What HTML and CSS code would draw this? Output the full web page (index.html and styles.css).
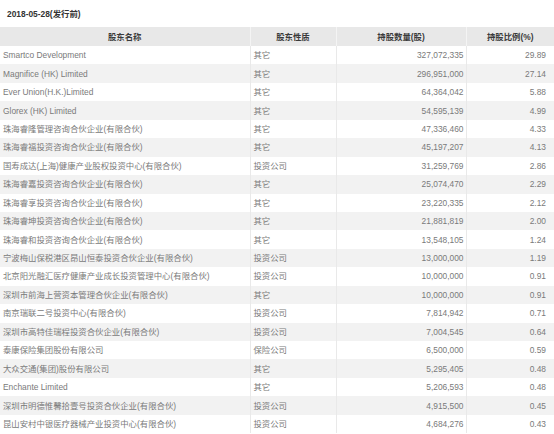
FILE: index.html
```html
<!DOCTYPE html>
<html lang="zh">
<head>
<meta charset="utf-8">
<link rel="stylesheet" href="styles.css">
</head>
<body>
<div class="title">2018-05-28(发行前)</div>
<table class="holders">
<colgroup>
<col class="c-name"><col class="c-type"><col class="c-num"><col class="c-pct">
</colgroup>
<thead>
<tr><th>股东名称</th><th>股东性质</th><th>持股数量(股)</th><th>持股比例(%)</th></tr>
</thead>
<tbody>
<tr><td>Smartco Development</td><td>其它</td><td class="num">327,072,335</td><td class="pct">29.89</td></tr>
<tr><td>Magnifice (HK) Limited</td><td>其它</td><td class="num">296,951,000</td><td class="pct">27.14</td></tr>
<tr><td>Ever Union(H.K.)Limited</td><td>其它</td><td class="num">64,364,042</td><td class="pct">5.88</td></tr>
<tr><td>Glorex (HK) Limited</td><td>其它</td><td class="num">54,595,139</td><td class="pct">4.99</td></tr>
<tr><td>珠海睿隆管理咨询合伙企业(有限合伙)</td><td>其它</td><td class="num">47,336,460</td><td class="pct">4.33</td></tr>
<tr><td>珠海睿福投资咨询合伙企业(有限合伙)</td><td>其它</td><td class="num">45,197,207</td><td class="pct">4.13</td></tr>
<tr><td>国寿成达(上海)健康产业股权投资中心(有限合伙)</td><td>投资公司</td><td class="num">31,259,769</td><td class="pct">2.86</td></tr>
<tr><td>珠海睿嘉投资咨询合伙企业(有限合伙)</td><td>其它</td><td class="num">25,074,470</td><td class="pct">2.29</td></tr>
<tr><td>珠海睿享投资咨询合伙企业(有限合伙)</td><td>其它</td><td class="num">23,220,335</td><td class="pct">2.12</td></tr>
<tr><td>珠海睿坤投资咨询合伙企业(有限合伙)</td><td>其它</td><td class="num">21,881,819</td><td class="pct">2.00</td></tr>
<tr><td>珠海睿和投资咨询合伙企业(有限合伙)</td><td>其它</td><td class="num">13,548,105</td><td class="pct">1.24</td></tr>
<tr><td>宁波梅山保税港区昂山恒泰投资合伙企业(有限合伙)</td><td>投资公司</td><td class="num">13,000,000</td><td class="pct">1.19</td></tr>
<tr><td>北京阳光融汇医疗健康产业成长投资管理中心(有限合伙)</td><td>投资公司</td><td class="num">10,000,000</td><td class="pct">0.91</td></tr>
<tr><td>深圳市前海上营资本管理合伙企业(有限合伙)</td><td>其它</td><td class="num">10,000,000</td><td class="pct">0.91</td></tr>
<tr><td>南京瑞联二号投资中心(有限合伙)</td><td>投资公司</td><td class="num">7,814,942</td><td class="pct">0.71</td></tr>
<tr><td>深圳市高特佳瑞程投资合伙企业(有限合伙)</td><td>投资公司</td><td class="num">7,004,545</td><td class="pct">0.64</td></tr>
<tr><td>泰康保险集团股份有限公司</td><td>保险公司</td><td class="num">6,500,000</td><td class="pct">0.59</td></tr>
<tr><td>大众交通(集团)股份有限公司</td><td>其它</td><td class="num">5,295,405</td><td class="pct">0.48</td></tr>
<tr><td>Enchante Limited</td><td>其它</td><td class="num">5,206,593</td><td class="pct">0.48</td></tr>
<tr><td>深圳市明德惟馨拾壹号投资合伙企业(有限合伙)</td><td>投资公司</td><td class="num">4,915,500</td><td class="pct">0.45</td></tr>
<tr><td>昆山安村中银医疗器械产业投资中心(有限合伙)</td><td>投资公司</td><td class="num">4,684,276</td><td class="pct">0.43</td></tr>
</tbody>
</table>
</body>
</html>
```
FILE: styles.css
```css
html, body {
  margin: 0;
  padding: 0;
  background: #ffffff;
}
body {
  font-family: "Liberation Sans", Arial, "Noto Sans CJK SC", sans-serif;
  font-size: 8.4px;
  color: #7a7a7a;
  width: 554px;
  overflow: hidden;
}
.title {
  height: 26.5px;
  box-sizing: border-box;
  padding: 9px 0 0 7px;
  line-height: 10px;
  font-weight: bold;
  color: #333333;
}
.holders {
  width: 554px;
  table-layout: fixed;
  border-collapse: collapse;
  border-spacing: 0;
}
.c-name { width: 250px; }
.c-type { width: 86px; }
.c-num { width: 130px; }
.c-pct { width: 88px; }
.holders th {
  height: 19.5px;
  padding: 0;
  background: #e8e8e8;
  color: #3a3a3a;
  font-weight: bold;
  text-align: center;
  border-right: 1px solid #f4f4f4;
  white-space: nowrap;
}
.holders th:last-child { border-right: none; }
.holders td {
  height: 18.45px;
  padding: 0 0 0 3px;
  border-right: 1px solid #e9e9e9;
  white-space: nowrap;
  overflow: hidden;
  line-height: 10px;
}
.holders td:last-child { border-right: none; }
.holders tbody tr:nth-child(even) td {
  background: #f2f2f2;
}
.holders td.num {
  text-align: right;
  padding: 0 2px 0 0;
}
.holders td.pct {
  text-align: right;
  padding: 0 8px 0 0;
}
```
